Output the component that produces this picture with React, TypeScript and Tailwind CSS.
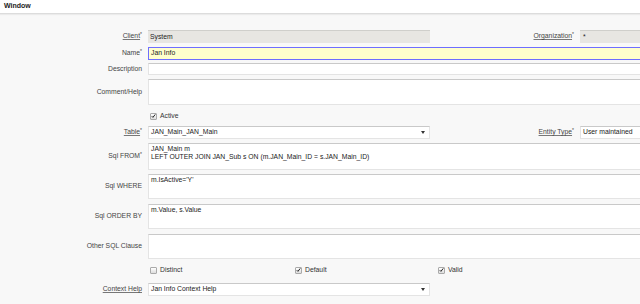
const font = { fontFamily: '"Liberation Sans", Arial, sans-serif' }

function Label({ text, req, link, w = "w-[143px]" }: { text: string; req?: boolean; link?: boolean; w?: string }) {
  return (
    <div className={`${w} shrink-0 text-right pr-[1px] text-[6.8px] text-[#444]`}>
      <span className={link ? "underline decoration-[#777]" : ""}>{text}</span>
      {req && <span className="text-[5px] align-top">*</span>}
    </div>
  )
}

function Check({ checked, label }: { checked?: boolean; label: string }) {
  return (
    <div className="flex items-center gap-[3px] text-[6.8px] text-[#333]">
      <div className="w-[7px] h-[7px] rounded-[1px] border border-[#aaa] bg-gradient-to-b from-[#fff] to-[#ddd] flex items-center justify-center">
        {checked && (
          <svg viewBox="0 0 8 8" className="w-[6px] h-[6px]">
            <path d="M1.2 4.3 L3.1 6.2 L6.8 1.4" stroke="#222" strokeWidth="1.6" fill="none" />
          </svg>
        )}
      </div>
      <span>{label}</span>
    </div>
  )
}

function Arrow() {
  return <div className="w-0 h-0 border-l-[2.5px] border-r-[2.5px] border-t-[3px] border-l-transparent border-r-transparent border-t-[#333]" />
}

const box = "border border-[#e4e4e4] border-t-[#c9c9c9] bg-white text-[6.8px] text-[#222] px-[2px]"

export default function App() {
  return (
    <div className="w-[640px] h-[304px] overflow-hidden bg-[#f8f8f8]" style={font}>
      <div className="h-[14px] bg-white border-b border-[#dcdcdc] shadow-[0_1px_1px_rgba(0,0,0,0.05)] flex items-center px-[4px]">
        <span className="text-[7px] font-bold text-[#222]">Window</span>
      </div>

      <div className="w-[720px] flex flex-col">
        <div className="flex items-center gap-[5px] mt-[16px] h-[13px]">
          <Label text="Client" req link />
          <div className="w-[282px] h-[13px] flex items-center bg-[#e7e6e2] border-t border-[#cfcfcb] text-[6.8px] text-[#222] px-[2px]">System</div>
          <Label text="Organization" req link w="w-[140px]" />
          <div className="flex-1 h-[13px] flex items-center bg-[#e7e6e2] border-t border-[#cfcfcb] text-[6.8px] text-[#222] px-[3px]">*</div>
        </div>

        <div className="flex items-center gap-[5px] mt-[4px] h-[13px]">
          <Label text="Name" req />
          <div className="flex-1 h-[13px] flex items-center bg-[#ffffcc] border border-[#6e6eff] text-[6.8px] text-[#222] px-[2px]">Jan Info</div>
        </div>

        <div className="flex items-center gap-[5px] mt-[3px] h-[12px]">
          <Label text="Description" />
          <div className={`flex-1 h-[12px] ${box}`} />
        </div>

        <div className="flex items-center gap-[5px] mt-[4px] h-[26px]">
          <Label text="Comment/Help" />
          <div className={`flex-1 h-[26px] ${box}`} />
        </div>

        <div className="flex items-center gap-[5px] mt-[6px] h-[10px]">
          <div className="w-[143px] shrink-0" />
          <div className="pl-[2px]">
            <Check checked label="Active" />
          </div>
        </div>

        <div className="flex items-center gap-[5px] mt-[5px] h-[13px]">
          <Label text="Table" req link />
          <div className={`w-[282px] h-[13px] flex items-center justify-between ${box} pr-[4px]`}>
            <span>JAN_Main_JAN_Main</span>
            <Arrow />
          </div>
          <Label text="Entity Type" req link w="w-[140px]" />
          <div className={`flex-1 h-[13px] flex items-center ${box}`}>User maintained</div>
        </div>

        <div className="flex items-center gap-[5px] mt-[4px] h-[27px]">
          <Label text="Sql FROM" req />
          <div className={`flex-1 h-[27px] ${box} pt-[1px] leading-[8px]`}>
            <div>JAN_Main m</div>
            <div>LEFT OUTER JOIN JAN_Sub s ON (m.JAN_Main_ID = s.JAN_Main_ID)</div>
          </div>
        </div>

        <div className="flex items-center gap-[5px] mt-[4px] h-[25px]">
          <Label text="Sql WHERE" />
          <div className={`flex-1 h-[25px] ${box} pt-[1px] leading-[8px]`}>m.IsActive='Y'</div>
        </div>

        <div className="flex items-center gap-[5px] mt-[5px] h-[25px]">
          <Label text="Sql ORDER BY" />
          <div className={`flex-1 h-[25px] ${box} pt-[1px] leading-[8px]`}>m.Value, s.Value</div>
        </div>

        <div className="flex items-center gap-[5px] mt-[5px] h-[25px]">
          <Label text="Other SQL Clause" />
          <div className={`flex-1 h-[25px] ${box}`} />
        </div>

        <div className="flex items-center gap-[5px] mt-[6px] h-[10px]">
          <div className="w-[143px] shrink-0" />
          <div className="w-[140px] pl-[2px]">
            <Check label="Distinct" />
          </div>
          <div className="w-[138px] pl-[2px]">
            <Check checked label="Default" />
          </div>
          <div className="pl-[2px]">
            <Check checked label="Valid" />
          </div>
        </div>

        <div className="flex items-center gap-[5px] mt-[8px] h-[13px]">
          <Label text="Context Help" link />
          <div className={`w-[282px] h-[13px] flex items-center justify-between ${box} pr-[4px]`}>
            <span>Jan Info Context Help</span>
            <Arrow />
          </div>
        </div>
      </div>
    </div>
  )
}
